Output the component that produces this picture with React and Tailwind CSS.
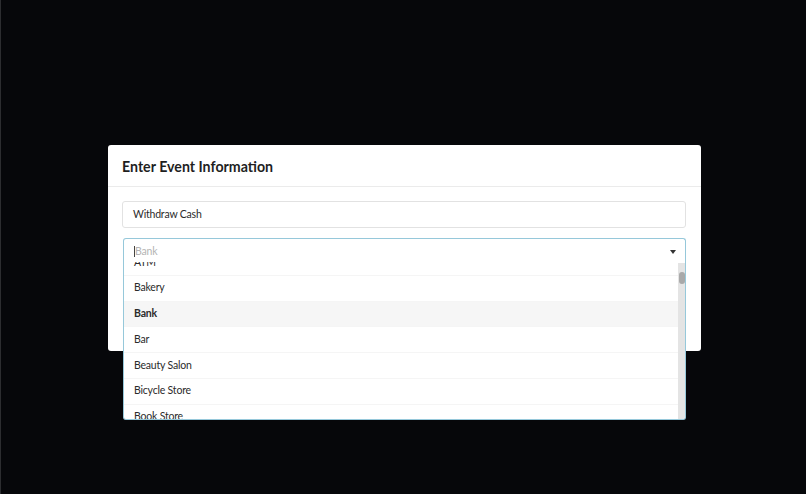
import React from 'react';

const categories = ['ATM', 'Bakery', 'Bank', 'Bar', 'Beauty Salon', 'Bicycle Store', 'Book Store'];

export default function App() {
    return (
        <div className="h-[494px] w-full bg-[#06070a] border-l border-[#2c2d30] flex items-center justify-center" style={{ fontFamily: 'Lato, "Noto Sans", sans-serif' }}>
            <div className="w-[593px] h-[206px] bg-white rounded-[3px] mt-[2px] ml-[2px]">
                {/* Header */}
                <div className="h-[42px] px-[14px] flex items-center border-b border-[#ebebeb]">
                    <h2 className="text-[14.2px] font-bold text-[#1f1f1f] pt-[3px]">Enter Event Information</h2>
                </div>

                {/* Body */}
                <div className="pt-[14px] pl-[14px] pr-[15px]">
                    <div className="h-[27px] border border-[#e2e2e2] rounded-[3px] px-[10px] flex items-center text-[10.5px] tracking-[-0.2px] text-[#2b2b2b] pt-px">
                        Withdraw Cash
                    </div>

                    <CategoryDropdown />
                </div>
            </div>
        </div>
    );
}

function CategoryDropdown() {
    return (
        <div className="relative mt-[10px] ml-px">
            <div className="h-[24px] border border-b-0 border-[#96c8da] rounded-t-[3px] flex items-center pl-[10px] pr-[9px] pt-[2px] bg-white">
                <span className="w-px h-[11px] bg-[#444]"></span>
                <span className="text-[10.5px] tracking-[-0.2px] text-[#b4b4b4]">Bank</span>
                <span className="ml-auto w-0 h-0 border-l-[3px] border-r-[3px] border-t-[4px] border-l-transparent border-r-transparent border-t-[#333]"></span>
            </div>

            {/* Menu lies over the modal edge */}
            <div className="absolute left-0 right-0 top-full h-[158px] bg-white border border-t-0 border-[#96c8da] rounded-b-[3px] overflow-hidden flex z-10">
                <div className="flex-1 overflow-hidden">
                    <div className="-mt-[13px]">
                        {categories.map((name) => (
                            <div
                                key={name}
                                className={`h-[25.75px] pl-[10px] flex items-center border-t border-[#f5f5f5] text-[10.5px] tracking-[-0.2px] text-[#2b2b2b] ${name === 'Bank' ? 'bg-[#f6f6f6] font-bold text-[#1f1f1f]' : ''}`}
                            >
                                {name}
                            </div>
                        ))}
                    </div>
                </div>
                <div className="w-[7px] bg-[#e4e4e4] flex justify-center pt-[9px] mt-[1px]">
                    <div className="w-[6px] h-[12px] rounded-full bg-[#a9a9a9]"></div>
                </div>
            </div>
        </div>
    );
}
